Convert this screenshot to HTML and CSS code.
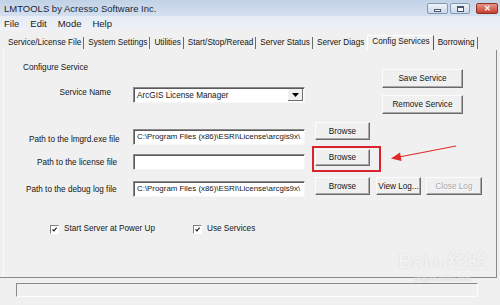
FILE: index.html
```html
<!DOCTYPE html>
<html lang="en">
<head>
  <meta charset="UTF-8" />
  <title>LMTOOLS</title>
  <link rel="stylesheet" href="styles.css">
</head>
<body>
  <div class="titlebar">
    <span class="title">LMTOOLS by Acresso Software Inc.</span>
    <div class="controls">
      <span class="ctl ctl-min"><i></i></span>
      <span class="ctl ctl-max"><i></i></span>
      <span class="ctl ctl-close">&#x2715;</span>
    </div>
  </div>

  <div class="menubar">
    <span>File</span>
    <span>Edit</span>
    <span>Mode</span>
    <span>Help</span>
  </div>

  <div class="tabs">
    <span class="tab">Service/License File</span>
    <span class="tab">System Settings</span>
    <span class="tab">Utilities</span>
    <span class="tab">Start/Stop/Reread</span>
    <span class="tab">Server Status</span>
    <span class="tab tab-plain">Server Diags</span>
    <span class="tab tab-active">Config Services</span>
    <span class="tab">Borrowing</span>
  </div>

  <div class="panel">
    <div class="top">
      <div class="top-left">
        <div class="group-title">Configure Service</div>
        <div class="row row-service">
          <label class="lbl lbl-service">Service Name</label>
          <div class="select">
            <span class="select-text">ArcGIS License Manager</span>
            <span class="select-btn">
              <svg width="7" height="4" viewBox="0 0 7 4"><path d="M0 0h7L3.5 4z" fill="#000"/></svg>
            </span>
          </div>
        </div>
      </div>
      <div class="top-right">
        <button class="btn btn-wide">Save Service</button>
        <button class="btn btn-wide">Remove Service</button>
      </div>
    </div>

    <!-- path rows -->
    <div class="row row-lmgrd">
      <label class="lbl lbl-lmgrd">Path to the lmgrd.exe file</label>
      <div class="field">C:\Program Files (x86)\ESRI\License\arcgis9x\</div>
      <button class="btn btn-browse">Browse</button>
    </div>

    <div class="row row-license">
      <label class="lbl lbl-license">Path to the license file</label>
      <div class="field"></div>
      <span class="highlight"><button class="btn btn-browse btn-short">Browse</button></span>
    </div>

    <div class="row row-debug">
      <label class="lbl lbl-debug">Path to the debug log file</label>
      <div class="field">C:\Program Files (x86)\ESRI\License\arcgis9x\</div>
      <button class="btn btn-browse">Browse</button>
      <button class="btn btn-view">View Log...</button>
      <button class="btn btn-close" disabled>Close Log</button>
    </div>

    <div class="checks">
      <span class="check check-first">
        <svg class="box" width="9" height="9" viewBox="0 0 9 9"><path d="M2 4.2l1.8 2L7.2 2.2" fill="none" stroke="#111" stroke-width="1.4"/></svg>
        Start Server at Power Up
      </span>
      <span class="check">
        <svg class="box" width="9" height="9" viewBox="0 0 9 9"><path d="M2 4.2l1.8 2L7.2 2.2" fill="none" stroke="#111" stroke-width="1.4"/></svg>
        Use Services
      </span>
    </div>
  </div>

  <div class="status"></div>

  <!-- annotation arrow drawn over the dialog -->
  <svg class="arrow" width="500" height="305" viewBox="0 0 500 305">
    <line x1="456" y1="146" x2="399" y2="157" stroke="#e02a2a" stroke-width="1.2"/>
    <path d="M391 158.5L401.5 161L400 152.5z" fill="#e02a2a"/>
  </svg>

  <div class="watermark">
    <span class="wm-big">Bai<span class="wm-du">du</span>经验</span>
    <span class="wm-small">jingyan.baidu.com</span>
  </div>
</body>
</html>
```

FILE: styles.css
```css
* {
  box-sizing: border-box;
}
body {
  margin: 0;
  width: 500px;
  height: 305px;
  overflow: hidden;
  position: relative;
  background-color: #f0f0f0;
  font-family: "Liberation Sans", Arial, sans-serif;
  font-size: 8.2px;
  color: #151515;
}

/* title bar */
.titlebar {
  height: 16px;
  display: flex;
  background: linear-gradient(#c2d2e6, #d4e0ef);
  padding-left: 4px;
}
.title {
  flex: 1;
  font-size: 9.5px;
  line-height: 16px;
  color: #1c2735;
  padding-top: 1px;
}
.controls {
  display: flex;
  margin-top: 3px;
  margin-right: 2px;
}
.ctl {
  height: 11px;
  border: 1px solid #8497b2;
  border-radius: 2px;
  background: linear-gradient(#eef3f9, #cbd8e8);
  display: flex;
  align-items: center;
  justify-content: center;
}
.ctl-min {
  width: 21px;
  margin-right: 2px;
}
.ctl-min i {
  width: 7px;
  height: 3px;
  margin-top: 3px;
  background: #fff;
  border: 1px solid #45566e;
}
.ctl-max {
  width: 20px;
  margin-right: 6px;
}
.ctl-max i {
  width: 7px;
  height: 6px;
  border: 1px solid #45566e;
  border-top-width: 2px;
  background: #f4f7fb;
}
.ctl-close {
  width: 22px;
  background: linear-gradient(#e6968a, #c43e2d);
  border-color: #8e3224;
  color: #fff;
  font-size: 8px;
  font-weight: bold;
}

/* menu */
.menubar {
  height: 14px;
  display: flex;
  gap: 11px;
  padding: 2px 0 0 4px;
  background: linear-gradient(#e6ecf5, #eef1f7);
  font-size: 9.5px;
  line-height: 12px;
  color: #1b1b1b;
}

/* tabs */
.tabs {
  height: 20px;
  display: flex;
  align-items: flex-end;
  padding-left: 5px;
  padding-bottom: 1px;
}
.tab {
  height: 12px;
  line-height: 12px;
  padding: 0 2px 0 4px;
  border-right: 1px solid #6b6b6b;
  white-space: nowrap;
}
.tab:first-child {
  padding-left: 3px;
}
.tab-plain {
  border-right: none;
}
.tab-active {
  height: 15px;
  line-height: 11px;
  margin-left: 1px;
  padding: 0 3px 0 4px;
  border-left: 1px solid #fff;
  border-top: 1px solid #fff;
  border-right: 1px solid #555;
  margin-bottom: -1px;
}

/* panel */
.panel {
  width: 497px;
  height: 228px;
  border-right: 1px solid #8a8a8a;
  border-bottom: 1px solid #8a8a8a;
  box-shadow: inset 4px 0 0 -1px #f0f0f0, inset 4px 0 0 0 #fbfbfb;
}
.top {
  display: flex;
}
.top-left {
  width: 382px;
}
.group-title {
  margin: 13px 0 0 23px;
  line-height: 10px;
}
.top-right {
  display: flex;
  flex-direction: column;
  gap: 7px;
  padding-top: 19px;
}
.row {
  display: flex;
  align-items: flex-start;
}
.lbl {
  width: 133px;
  line-height: 10px;
  white-space: nowrap;
}
.row-service {
  margin-top: 14px;
}
.lbl-service {
  margin-top: 1px;
  text-align: right;
  padding-right: 22px;
}
.select {
  width: 172px;
  height: 16px;
  display: flex;
  background: #fff;
  border: 1px solid;
  border-color: #8a8a8a #f6f6f6 #f6f6f6 #8a8a8a;
  box-shadow: inset 1px 1px 0 #5a5a5a;
}
.select-text {
  flex: 1;
  padding: 3px 0 0 3px;
  line-height: 10px;
}
.select-btn {
  width: 15px;
  margin: 1px 1px 1px 0;
  background: #f0f0f0;
  border-right: 1px solid #6e6e6e;
  border-bottom: 1px solid #6e6e6e;
  display: flex;
  align-items: center;
  justify-content: center;
}
.field {
  width: 172px;
  height: 16px;
  background: #fff;
  border: 1px solid;
  border-color: #8a8a8a #f6f6f6 #f6f6f6 #8a8a8a;
  box-shadow: inset 1px 1px 0 #5a5a5a;
  padding: 2px 0 0 3px;
  font-size: 7.9px;
  line-height: 10px;
  white-space: nowrap;
  overflow: hidden;
}

.row-lmgrd {
  margin-top: 8px;
}
.lbl-lmgrd {
  margin-top: 13px;
  padding-left: 29px;
}
.row-lmgrd .field {
  margin-top: 7px;
}
.row-license {
  margin-top: 4px;
}
.lbl-license {
  margin-top: 9px;
  padding-left: 37px;
}
.row-license .field {
  margin-top: 5px;
}
.row-debug {
  margin-top: 7px;
}
.lbl-debug {
  margin-top: 8px;
  padding-left: 26px;
}
.row-debug .field {
  margin-top: 4px;
}

/* buttons */
.btn {
  height: 18px;
  padding: 0;
  font-family: inherit;
  font-size: 8.2px;
  color: #151515;
  background: #f0f0f0;
  border: 1px solid;
  border-color: #fcfcfc #6a6a6a #6a6a6a #fcfcfc;
  box-shadow: inset -1px -1px 0 #a9a9a9;
}
.btn-wide {
  width: 81px;
  height: 19px;
}
.btn-browse {
  width: 55px;
  margin-left: 10px;
}
.btn-short {
  height: 17px;
  margin-left: 0;
}
.btn-view {
  width: 45px;
  margin-left: 6px;
}
.btn-close {
  width: 56px;
  margin-left: 5px;
  color: #a8a8a8;
  text-shadow: 1px 1px 0 #fff;
}
.highlight {
  display: block;
  border: 2px solid #d9232d;
  padding: 1px 9px 4px 1px;
  margin: -3px -11px -6px 7px;
}

/* checkboxes */
.checks {
  display: flex;
  margin: 27px 0 0 50px;
  line-height: 10px;
}
.check {
  display: flex;
  align-items: center;
  gap: 5px;
  white-space: nowrap;
}
.check-first {
  width: 143px;
}
.box {
  background: #fff;
  border: 1px solid;
  border-color: #808080 #fff #fff #808080;
  box-sizing: content-box;
  width: 7px;
  height: 7px;
}

/* status line */
.status {
  margin: 5px 0 0 16px;
  width: 462px;
  height: 14px;
  border: 1px solid;
  border-color: #8a8a8a #fdfdfd #fdfdfd #8a8a8a;
}

/* overlays */
.arrow {
  position: absolute;
  left: 0;
  top: 0;
  pointer-events: none;
}
.watermark {
  position: absolute;
  left: 398px;
  top: 250px;
  display: flex;
  flex-direction: column;
  align-items: center;
  color: rgba(255, 255, 255, 0.75);
  text-shadow: 0 0 1px rgba(120, 120, 120, 0.35);
}
.wm-big {
  font-size: 20px;
  line-height: 22px;
  font-weight: bold;
  font-family: "Liberation Sans", "Noto Sans CJK SC", sans-serif;
}
.wm-du {
  font-size: 15px;
}
.wm-small {
  font-size: 7px;
  line-height: 9px;
  color: rgba(255, 255, 255, 0.6);
}
```
